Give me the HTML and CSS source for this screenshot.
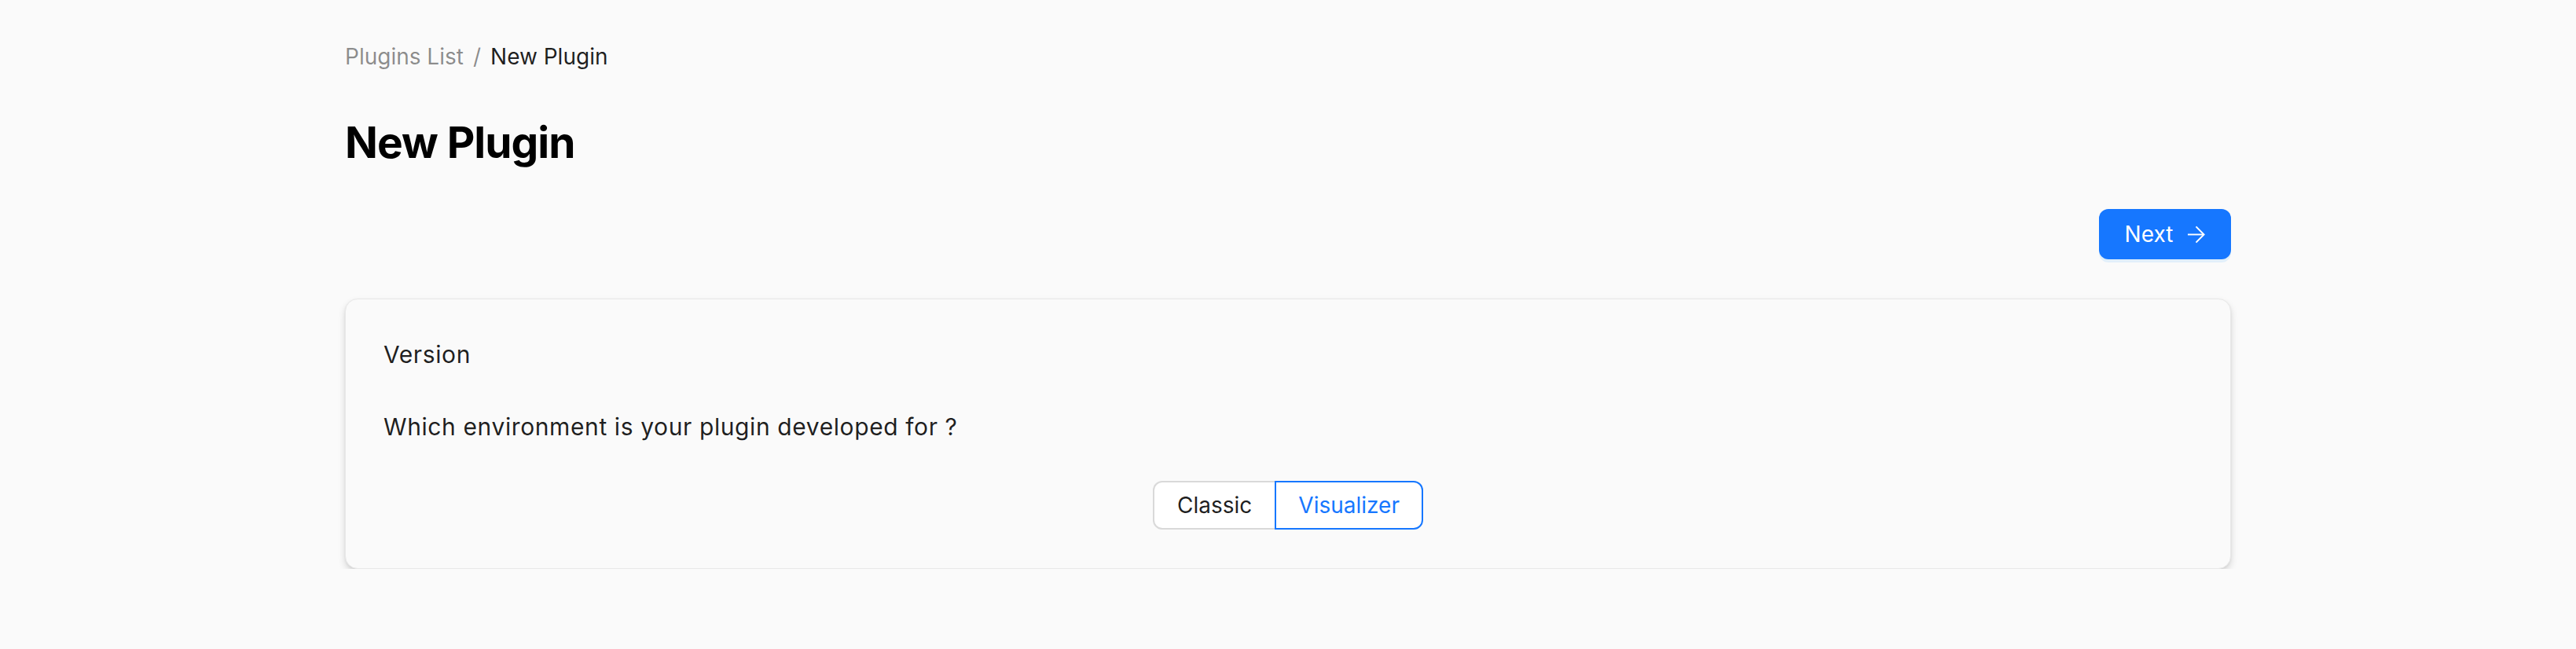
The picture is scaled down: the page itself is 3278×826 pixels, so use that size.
FILE: index.html
```html
<!DOCTYPE html>
<html lang="en">
<head>
<meta charset="utf-8">
<title>New Plugin</title>
<link rel="stylesheet" href="styles.css">
</head>
<body>
<div class="page">
  <nav class="breadcrumb">
    <span class="crumb-link">Plugins List</span>
    <span class="crumb-sep">/</span>
    <span class="crumb-current">New Plugin</span>
  </nav>
  <h1 class="title">New Plugin</h1>
  <div class="actions">
    <button class="btn-primary">
      <span>Next</span>
      <svg class="arrow" viewBox="0 0 24 24" width="24" height="24" fill="none" stroke="#fff" stroke-width="2" stroke-linecap="butt" stroke-linejoin="miter">
        <path d="M1 12H22"/>
        <path d="M12 1.5L22.5 12L12 22.5"/>
      </svg>
    </button>
  </div>
  <section class="card">
    <div class="card-title">Version</div>
    <div class="question">Which environment is your plugin developed for ?</div>
    <div class="toggle-row">
      <div class="segmented">
        <span class="seg seg-left">Classic</span>
        <span class="seg seg-active">Visualizer</span>
      </div>
    </div>
  </section>
</div>
</body>
</html>
```
FILE: styles.css
```css
* { box-sizing: border-box; }
html, body {
  margin: 0;
  background: #fafafa;
}
body {
  font-family: Inter, "Noto Sans", "Liberation Sans", sans-serif;
  color: rgba(0,0,0,0.88);
}
.page {
  width: 2400px;
  margin: 0 auto;
  padding-top: 50px;
}
.breadcrumb {
  display: flex;
  align-items: center;
  font-size: 28px;
  line-height: 44px;
  height: 44px;
}
.crumb-link { color: rgba(0,0,0,0.45); }
.crumb-sep { color: rgba(0,0,0,0.45); margin: 0 12px; }
.crumb-current { color: rgba(0,0,0,0.88); }
.title {
  margin: 54px 0 0;
  font-size: 55px;
  line-height: 67px;
  font-weight: 700;
  color: #000;
  letter-spacing: -1px;
}
.actions {
  display: flex;
  justify-content: flex-end;
  margin-top: 51px;
}
.btn-primary {
  display: flex;
  align-items: center;
  justify-content: center;
  gap: 18px;
  width: 168px;
  height: 64px;
  padding: 0 30px;
  border: none;
  border-radius: 12px;
  background: #1677ff;
  color: #fff;
  font-family: inherit;
  font-size: 28px;
  box-shadow: 0 4px 0 rgba(5,145,255,0.1);
}
.arrow { width: 23px; height: 23px; display: block; }
.card {
  margin-top: 50px;
  border: 1px solid #e8e8e8;
  border-radius: 16px;
  background: #fafafa;
  padding: 48px 48px 49px;
  box-shadow: 0 5px 10px rgba(0,0,0,0.14), 0 1px 3px rgba(0,0,0,0.06);
}
.card-title, .question {
  font-size: 30px;
  line-height: 44px;
  letter-spacing: 0.6px;
}
.question { margin-top: 48px; }
.toggle-row {
  display: flex;
  justify-content: center;
  margin-top: 47px;
}
.segmented { display: flex; }
.seg {
  height: 62px;
  line-height: 58px;
  font-size: 28px;
  padding: 0 29px;
  background: #fff;
  border: 2px solid #d9d9d9;
}
.seg-left {
  border-radius: 12px 0 0 12px;
  border-right: none;
  color: rgba(0,0,0,0.88);
}
.seg-active {
  border-color: #1677ff;
  color: #1677ff;
  border-radius: 0 12px 12px 0;
  padding: 0 28px;
}
```
